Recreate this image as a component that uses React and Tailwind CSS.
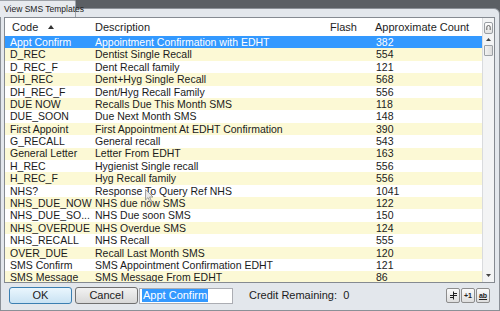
import React from 'react';

const templates = [
  ['Appt Confirm', 'Appointment Confirmation with EDHT', '382'],
  ['D_REC', 'Dentist Single Recall', '554'],
  ['D_REC_F', 'Dent Recall family', '121'],
  ['DH_REC', 'Dent+Hyg Single Recall', '568'],
  ['DH_REC_F', 'Dent/Hyg Recall Family', '556'],
  ['DUE NOW', 'Recalls Due This Month SMS', '118'],
  ['DUE_SOON', 'Due Next Month SMS', '148'],
  ['First Appoint', 'First Appointment At EDHT Confirmation', '390'],
  ['G_RECALL', 'General recall', '543'],
  ['General Letter', 'Letter From EDHT', '163'],
  ['H_REC', 'Hygienist Single recall', '556'],
  ['H_REC_F', 'Hyg Recall family', '556'],
  ['NHS?', 'Response To Query Ref NHS', '1041'],
  ['NHS_DUE_NOW', 'NHS due now SMS', '122'],
  ['NHS_DUE_SO...', 'NHS Due soon SMS', '150'],
  ['NHS_OVERDUE', 'NHS Overdue SMS', '124'],
  ['NHS_RECALL', 'NHS Recall', '555'],
  ['OVER_DUE', 'Recall Last Month SMS', '120'],
  ['SMS Confirm', 'SMS Appointment Confirmation EDHT', '121'],
  ['SMS Message', 'SMS  Message From EDHT', '86'],
];

const cols = 'grid grid-cols-[85px_235px_45px_1fr]';

const SmallButton = ({ children }) => (
  <div className="w-[14px] h-[15px] flex items-center justify-center border border-[#8d8d8d] rounded-[2px] bg-gradient-to-b from-[#fbfbfb] to-[#dedede] text-[7px] font-bold leading-none text-[#222]">
    {children}
  </div>
);

const App = () => {
  return (
    <div className="relative w-[500px] h-[311px] bg-[#5b5f64] overflow-hidden font-['Liberation_Sans',Arial,sans-serif] text-[10.5px] text-[#1b1b1b]">
      {/* window tab */}
      <div className="absolute left-0 top-0 w-[76px] h-[17px] bg-[#e7eaee] border-r border-t border-[#9ea3a9] rounded-tr-[2px] z-10 flex items-center pl-[4px] text-[8.5px] text-[#222] whitespace-nowrap">
        View SMS Templates
      </div>

      <div className="mt-[8px] h-[303px] bg-[#e3e7ec] border border-[#8b9097] rounded-tr-[6px] flex flex-col pl-[3px] pr-[4px] pt-[8px]">
        {/* list */}
        <div className="h-[266px] border border-[#858a91] bg-white flex overflow-hidden">
          <div className="flex-1 flex flex-col overflow-hidden">
            <div className={`${cols} h-[18px] items-center shrink-0 text-[#1e1e1e] text-[11px]`}>
              <div className="pl-[7px] flex items-center gap-[10px]">
                <span>Code</span>
                <svg width="6" height="4" viewBox="0 0 6 4"><path d="M0 4 L3 0 L6 4 Z" fill="#333" /></svg>
              </div>
              <div className="pl-[5px]">Description</div>
              <div className="pl-[5px]">Flash</div>
              <div className="pl-[5px] whitespace-nowrap">Approximate Count</div>
            </div>
            {templates.map((t, i) => (
              <div
                key={t[0]}
                className={`${cols} h-[12.4px] shrink-0 items-center leading-none whitespace-nowrap ${
                  i === 0 ? 'bg-[#3399ff] text-white' : i % 2 === 1 ? 'bg-[#fcf9d5]' : 'bg-white'
                }`}
              >
                <div className="pl-[5px]">{t[0]}</div>
                <div className="pl-[5px]">{t[1]}</div>
                <div className="pl-[5px]"></div>
                <div className="pl-[6px]">{t[2]}</div>
              </div>
            ))}
          </div>
          {/* scrollbar */}
          <div className="w-[12px] shrink-0 bg-[#f3f4f5] border-l border-[#d9dbde] flex flex-col items-center">
            <div className="mt-[4px] w-[9px] h-[12px] border border-[#9a9ea3] rounded-[2px] bg-gradient-to-b from-[#fdfdfd] to-[#e2e2e2] flex items-center justify-center">
              <svg width="5" height="6" viewBox="0 0 5 6"><path d="M0.8 5 V2.2 A1.7 1.7 0 0 1 4.2 2.2 V5" stroke="#555" fill="none" strokeWidth="0.9" /></svg>
            </div>
            <svg className="mt-[4px]" width="5" height="3" viewBox="0 0 5 3"><path d="M0 3 L2.5 0 L5 3 Z" fill="#444" /></svg>
            <div className="mt-[4px] w-[9px] h-[11px] border border-[#9da1a6] rounded-[1px] bg-gradient-to-r from-[#f2f2f2] to-[#dcdcdc]"></div>
            <div className="flex-1"></div>
            <svg className="mb-[5px]" width="5" height="3" viewBox="0 0 5 3"><path d="M0 0 L2.5 3 L5 0 Z" fill="#444" /></svg>
          </div>
        </div>

        {/* bottom bar */}
        <div className="h-[23px] flex items-center pl-[5px] pr-[5px] pt-[2px] text-[11px]">
          <button className="w-[63px] h-[17px] border border-[#3c7fb1] rounded-[3px] bg-gradient-to-b from-[#eaf6fd] to-[#c9e2f3] leading-none">
            OK
          </button>
          <button className="ml-[3px] w-[63px] h-[17px] border border-[#707070] rounded-[3px] bg-gradient-to-b from-[#f2f2f2] to-[#d8d8d8] leading-none">
            Cancel
          </button>
          <div className="ml-[1px] w-[94px] h-[16px] border border-[#abadb3] bg-white flex items-center pl-[2px]">
            <span className="bg-[#3399ff] text-white leading-[13px] px-[1px]">Appt Confirm</span>
          </div>
          <div className="ml-[16px] whitespace-nowrap">Credit Remaining:&nbsp;&nbsp;0</div>
          <div className="flex-1"></div>
          <div className="flex gap-[1px]">
            <SmallButton>
              <svg width="9" height="9" viewBox="0 0 9 9">
                <path d="M4.5 0.5 V8.5 M1 4.5 H8 M1 6.5 H4 M5 2.5 H8" stroke="#222" strokeWidth="1" fill="none" />
              </svg>
            </SmallButton>
            <SmallButton>+1</SmallButton>
            <SmallButton>
              <span className="underline">ab</span>
            </SmallButton>
          </div>
        </div>
      </div>

      {/* mouse cursor */}
      <svg className="absolute left-[145px] top-[189px]" width="9" height="14" viewBox="0 0 9 14">
        <path d="M0.5 0.5 L0.5 11 L3 8.6 L5 13 L6.5 12.3 L4.6 8 L8 8 Z" fill="#e8e8e8" stroke="#8a8a8a" strokeWidth="0.8" />
      </svg>
    </div>
  );
};

export default App;
